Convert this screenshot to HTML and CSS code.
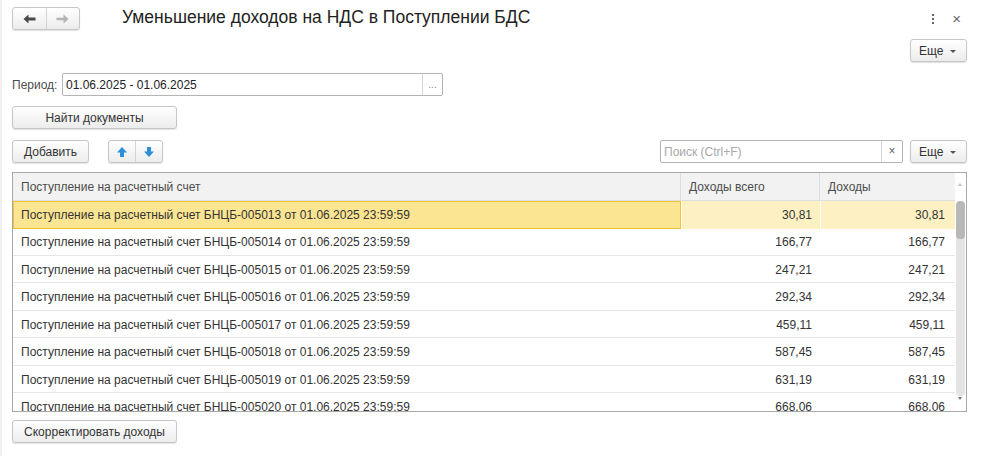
FILE: index.html
```html
<!DOCTYPE html>
<html lang="ru">
<head>
    <meta charset="UTF-8">
    <title>Уменьшение доходов на НДС в Поступлении БДС</title>
    <link rel="stylesheet" href="styles.css">
</head>
<body>
<div class="window">
    <div class="titlebar">
        <div class="btn-group nav">
            <span class="btn-part">
                <svg width="13" height="10" viewBox="0 0 13 10"><path d="M0.5 5 L5.5 0.5 V3.6 H12.5 V6.4 H5.5 V9.5 Z" fill="#4a4a4a"/></svg>
            </span>
            <span class="btn-part">
                <svg width="13" height="10" viewBox="0 0 13 10"><path d="M12.5 5 L7.5 0.5 V3.8 H0.5 V6.2 H7.5 V9.5 Z" fill="#b4b4b4"/></svg>
            </span>
        </div>
        <h1 class="title">Уменьшение доходов на НДС в Поступлении БДС</h1>
        <div class="win-icons">
            <span class="kebab"><i></i><i></i><i></i></span>
            <span class="close">&#215;</span>
        </div>
    </div>

    <div class="row right">
        <button class="btn more">Еще <span class="caret"></span></button>
    </div>

    <div class="row period">
        <label class="label">Период:</label>
        <div class="input">
            <span class="value">01.06.2025 - 01.06.2025</span>
            <span class="choice">...</span>
        </div>
    </div>

    <div class="row find">
        <button class="btn wide">Найти документы</button>
    </div>

    <div class="row commands">
        <button class="btn add">Добавить</button>
        <div class="btn-group arrows">
            <span class="btn-part">
                <svg width="12" height="12" viewBox="0 0 12 12"><path d="M6 1 L11 6.5 H8 V11 H4 V6.5 H1 Z" fill="#2f8fd8"/></svg>
            </span>
            <span class="btn-part">
                <svg width="12" height="12" viewBox="0 0 12 12"><path d="M6 11 L11 5.5 H8 V1 H4 V5.5 H1 Z" fill="#2f8fd8"/></svg>
            </span>
        </div>
        <div class="spacer"></div>
        <div class="search">
            <span class="placeholder">Поиск (Ctrl+F)</span>
            <span class="clear">&#215;</span>
        </div>
        <button class="btn more">Еще <span class="caret"></span></button>
    </div>

    <div class="grid">
        <div class="grid-head">
            <div class="cell">Поступление на расчетный счет</div>
            <div class="cell">Доходы всего</div>
            <div class="cell">Доходы</div>
            <div class="sb-head"><span class="sb-up"></span></div>
        </div>
        <div class="grid-body">
            <div class="rows">
                <div class="grid-row selected">
                    <div class="cell">Поступление на расчетный счет БНЦБ-005013 от 01.06.2025 23:59:59</div>
                    <div class="cell num">30,81</div>
                    <div class="cell num">30,81</div>
                </div>
                <div class="grid-row">
                    <div class="cell">Поступление на расчетный счет БНЦБ-005014 от 01.06.2025 23:59:59</div>
                    <div class="cell num">166,77</div>
                    <div class="cell num">166,77</div>
                </div>
                <div class="grid-row">
                    <div class="cell">Поступление на расчетный счет БНЦБ-005015 от 01.06.2025 23:59:59</div>
                    <div class="cell num">247,21</div>
                    <div class="cell num">247,21</div>
                </div>
                <div class="grid-row">
                    <div class="cell">Поступление на расчетный счет БНЦБ-005016 от 01.06.2025 23:59:59</div>
                    <div class="cell num">292,34</div>
                    <div class="cell num">292,34</div>
                </div>
                <div class="grid-row">
                    <div class="cell">Поступление на расчетный счет БНЦБ-005017 от 01.06.2025 23:59:59</div>
                    <div class="cell num">459,11</div>
                    <div class="cell num">459,11</div>
                </div>
                <div class="grid-row">
                    <div class="cell">Поступление на расчетный счет БНЦБ-005018 от 01.06.2025 23:59:59</div>
                    <div class="cell num">587,45</div>
                    <div class="cell num">587,45</div>
                </div>
                <div class="grid-row">
                    <div class="cell">Поступление на расчетный счет БНЦБ-005019 от 01.06.2025 23:59:59</div>
                    <div class="cell num">631,19</div>
                    <div class="cell num">631,19</div>
                </div>
                <div class="grid-row">
                    <div class="cell">Поступление на расчетный счет БНЦБ-005020 от 01.06.2025 23:59:59</div>
                    <div class="cell num">668,06</div>
                    <div class="cell num">668,06</div>
                </div>
            </div>
            <div class="scrollbar">
                <div class="track"><div class="thumb"></div></div>
                <span class="sb-down"></span>
            </div>
        </div>
    </div>

    <div class="row bottom">
        <button class="btn wide">Скорректировать доходы</button>
    </div>
</div>
</body>
</html>
```

FILE: styles.css
```css
body {
    margin: 0;
    background: #ffffff;
    font-family: "Liberation Sans", Arial, sans-serif;
    font-size: 12px;
    color: #404040;
}
.window {
    height: 456px;
    padding: 0 16px 0 10px;
    border-left: 2px solid #f0f0ee;
    box-sizing: border-box;
}
.row {
    display: flex;
    align-items: center;
}
.right {
    justify-content: flex-end;
    margin-top: 9px;
}

/* title bar */
.titlebar {
    display: flex;
    align-items: center;
    height: 23px;
    padding-top: 7px;
}
.title {
    margin: 0 0 0 42px;
    font-size: 17.5px;
    font-weight: normal;
    color: #222222;
    flex: 1;
    position: relative;
    top: -1px;
}
.win-icons {
    display: flex;
    align-items: center;
    gap: 18px;
    padding-right: 6px;
}
.kebab {
    display: flex;
    flex-direction: column;
    gap: 2px;
}
.kebab i {
    width: 2px;
    height: 2px;
    background: #666666;
}
.close {
    font-size: 15px;
    color: #666666;
}

/* buttons */
.btn, .btn-group {
    height: 23px;
    box-sizing: border-box;
    border: 1px solid #c6c6c6;
    border-radius: 3px;
    background: linear-gradient(#ffffff, #ececec);
    box-shadow: 0 1px 1px rgba(0, 0, 0, 0.12);
    font-family: inherit;
    font-size: 12px;
    color: #333333;
    padding: 0 10px;
}
.btn-group {
    display: flex;
    padding: 0;
}
.btn-part {
    width: 33px;
    display: flex;
    align-items: center;
    justify-content: center;
}
.btn-part + .btn-part {
    border-left: 1px solid #d4d4d4;
}
.nav {
    width: 68px;
}
.arrows {
    width: 55px;
    margin-left: 19px;
}
.arrows .btn-part {
    width: 27px;
}
.more {
    width: 57px;
    padding: 0 0 0 8px;
    text-align: left;
}
.caret {
    display: inline-block;
    width: 0;
    height: 0;
    border-left: 3px solid transparent;
    border-right: 3px solid transparent;
    border-top: 3px solid #555555;
    vertical-align: middle;
    margin-left: 3px;
}
.wide {
    width: 165px;
}
.add {
    width: 77px;
}

/* period field */
.period {
    margin-top: 11px;
}
.label {
    width: 50px;
    color: #4d4d4d;
}
.input {
    display: flex;
    width: 381px;
    height: 23px;
    box-sizing: border-box;
    border: 1px solid #b4b4b4;
    border-radius: 2px;
    background: #ffffff;
}
.input .value {
    flex: 1;
    padding: 4px 3px;
    color: #222222;
}
.choice {
    width: 19px;
    border-left: 1px solid #d6d6d6;
    text-align: center;
    color: #888888;
    font-size: 10px;
    line-height: 21px;
}
.find {
    margin-top: 10px;
}

/* command bar */
.commands {
    margin-top: 11px;
}
.spacer {
    flex: 1;
}
.search {
    display: flex;
    width: 243px;
    height: 23px;
    box-sizing: border-box;
    border: 1px solid #b4b4b4;
    border-radius: 2px;
    margin-right: 7px;
}
.placeholder {
    flex: 1;
    padding: 4px 3px;
    color: #a8a8a8;
}
.clear {
    width: 20px;
    border-left: 1px solid #d6d6d6;
    text-align: center;
    line-height: 21px;
    font-size: 12px;
    color: #666666;
}

/* list */
.grid {
    margin-top: 9px;
    width: 955px;
    border: 1px solid #a8a8a8;
    box-sizing: border-box;
}
.grid-head, .grid-row {
    display: grid;
    grid-template-columns: 668px 139px 135px;
}
.grid-head {
    grid-template-columns: 668px 139px 135px 11px;
    height: 27px;
    background: #f2f2f2;
    border-bottom: 1px solid #dedede;
}
.grid-head .cell {
    padding: 7px 8px;
    border-right: 1px solid #dcdcdc;
    color: #4d4d4d;
}
.grid-head .cell:nth-child(3) {
    border-right: none;
}
.sb-head {
    background: #ffffff;
    position: relative;
}
.sb-up, .sb-down {
    position: absolute;
    left: 3px;
    width: 0;
    height: 0;
    border-left: 2px solid transparent;
    border-right: 2px solid transparent;
}
.sb-up {
    top: 10px;
    border-bottom: 3px solid #c4c4c4;
}
.sb-down {
    bottom: 11px;
    border-top: 3px solid #777777;
}
.grid-body {
    display: flex;
    height: 210px;
    overflow: hidden;
}
.rows {
    width: 942px;
}
.grid-row {
    height: 27.43px;
    box-sizing: border-box;
    border-bottom: 1px solid #e6e6e6;
    color: #333333;
}
.grid-row .cell {
    padding: 7px 8px;
    white-space: nowrap;
}
.grid-row .num {
    text-align: right;
}
.grid-row .cell:nth-child(3) {
    padding-right: 10px;
}
.selected {
    border-bottom-color: #ffffff;
}
.selected .cell {
    background: #fdf1c3;
    border-left: 1px solid #ffffff;
}
.selected .cell:first-child {
    background: #fbe592;
    border: 1px solid #f1c232;
    padding: 6px 7px;
}
.scrollbar {
    width: 11px;
    position: relative;
}
.track {
    margin: 0 1px;
    height: 195px;
    border-radius: 4px;
    background: #e4e4e4;
    overflow: hidden;
}
.thumb {
    height: 38px;
    border-radius: 4px;
    background: #b8b8b8;
}
.bottom {
    margin-top: 8px;
}
```
